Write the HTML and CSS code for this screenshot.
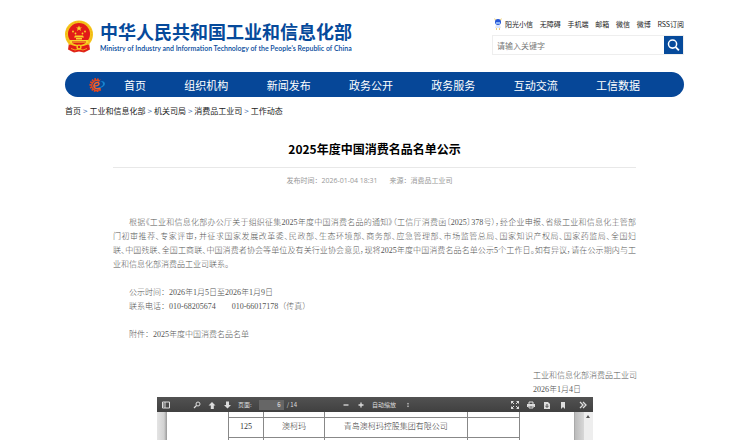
FILE: index.html
```html
<!DOCTYPE html>
<html lang="zh-CN">
<head>
<meta charset="utf-8">
<title>2025年度中国消费名品名单公示</title>
<link rel="stylesheet" href="styles.css">
</head>
<body>
<div class="page">
  <header class="header">
    <a class="brand" href="#">
      <svg class="emblem" viewBox="0 0 28 32" aria-hidden="true">
        <path d="M4 22 L3 29 L9 32 L14 31 L19 32 L25 29 L24 22Z" fill="#e02a1b"/>
        <circle cx="14" cy="14" r="14" fill="#f6c61c"/>
        <circle cx="14" cy="14" r="12.600" fill="none" stroke="#efb417" stroke-width="1" stroke-dasharray="2 1"/>
        <circle cx="14" cy="13.500" r="11" fill="#e21a18"/>
        <path d="M14 5l.9 2h2.100l-1.700 1.300.7 2.100-2-1.300-2 1.300.7-2.100L11 7h2.100z" fill="#f9d42a"/>
        <g fill="#f9d42a"><circle cx="8" cy="11" r=".9"/><circle cx="20" cy="11" r=".9"/><circle cx="10.500" cy="13" r=".9"/><circle cx="17.500" cy="13" r=".9"/></g>
        <path d="M10 15h8l1 2H9zM11 17.500h6v1.500h-6zM5 19.500h18v3H5z" fill="#f9d42a"/>
        <path d="M7 21h14v1H7z" fill="#e21a18"/>
        <path d="M5 24q9 4 18 0l1 5q-5 3-10 1-5 2-10-1z" fill="#e21a18"/>
        <circle cx="14" cy="26.500" r="2.600" fill="#f6c61c"/><circle cx="14" cy="26.500" r="1.200" fill="#e21a18"/>
        <path d="M6 28l4 1.500 4-1 4 1 4-1.500" fill="none" stroke="#f6c61c" stroke-width=".8"/>
      </svg>
      <span class="brand-text">
        <span class="brand-zh">中华人民共和国工业和信息化部</span>
        <span class="brand-en">Ministry of Industry and Information Technology of the People's Republic of China</span>
      </span>
    </a>
    <div class="tools">
      <nav class="links" aria-label="快捷链接">
        <a class="mascot" href="#"><svg viewBox="0 0 8 12" aria-hidden="true"><path d="M1 3L0 0l3 2M7 3l1-3-3 2" fill="#f5d98a"/><circle cx="4" cy="4" r="3" fill="#2456d8"/><path d="M2 4h4v2H2z" fill="#8db4f5"/><path d="M2 7h4l1 3H1z" fill="#dfe8fa"/><path d="M2 10h1v2H2zM5 10h1v2H5z" fill="#f3cf76"/></svg>阳光小信</a>
        <a href="#">无障碍</a><a href="#">手机端</a><a href="#">邮箱</a><a href="#">微信</a><a href="#">微博</a><a href="#">RSS订阅</a>
      </nav>
      <form class="search">
        <input type="text" placeholder="请输入关键字" aria-label="请输入关键字">
        <button type="button" aria-label="搜索"><svg viewBox="0 0 19 19" aria-hidden="true"><circle cx="8.500" cy="8.500" r="4.300" fill="none" stroke="#fff" stroke-width="1.600"/><path d="M11.800 11.800l3.400 3.400" stroke="#fff" stroke-width="2"/></svg></button>
      </form>
    </div>
  </header>

  <nav class="mainnav" aria-label="主导航">
    <svg class="gear" viewBox="0 0 16 16" aria-hidden="true">
      <path d="M11.500 12.500A6 6 0 1 1 11 3.300" fill="none" stroke="#e5481d" stroke-width="2" stroke-dasharray="1.600 1"/>
      <path d="M11.500 11.800A5 5 0 1 1 10.500 4.200" fill="none" stroke="#e5481d" stroke-width="1.600"/>
      <path d="M4.500 9c3 .3 5.500-.5 5.500-2.300S5.800 5 5 8.200s3.500 4.300 6.500 2.600" fill="none" stroke="#f4622d" stroke-width="1.500"/>
      <path d="M11 4c5.500-.5 6.500 4 2.500 6-2 1-4 1-6 .5 4 0 6.500-1.500 6.500-3.500 0-1.500-1-2.500-3-3z" fill="#1785cf"/>
    </svg>
    <div class="menu">
      <a href="#">首页</a><a href="#">组织机构</a><a href="#">新闻发布</a><a href="#">政务公开</a><a href="#">政务服务</a><a href="#">互动交流</a><a href="#">工信数据</a>
    </div>
  </nav>

  <nav class="crumbs" aria-label="当前位置">
    <a href="#">首页</a><span>&gt;</span><a href="#">工业和信息化部</a><span>&gt;</span><a href="#">机关司局</a><span>&gt;</span><a href="#">消费品工业司</a><span>&gt;</span><a href="#">工作动态</a>
  </nav>

  <main class="article">
    <h1>2025年度中国消费名品名单公示</h1>
    <div class="meta"><span>发布时间：2026-01-04 18:31</span><span>来源：消费品工业司</span></div>
    <div class="content">
      <p class="lead">
        <span class="line first">根据《工业和信息化部办公厅关于组织征集2025年度中国消费名品的通知》（工信厅消费函〔2025〕378号），经企业申报、省级工业和信息化主管部</span>
        <span class="line">门初审推荐、专家评审，并征求国家发展改革委、民政部、生态环境部、商务部、应急管理部、市场监管总局、国家知识产权局、国家药监局、全国妇</span>
        <span class="line">联、中国残联、全国工商联、中国消费者协会等单位及有关行业协会意见，现将2025年度中国消费名品名单公示5个工作日。如有异议，请在公示期内与工</span>
        <span class="line last">业和信息化部消费品工业司联系。</span>
      </p>
      <p>公示时间：2026年1月5日至2026年1月9日<br>联系电话：010-68205674&emsp;&emsp;010-66017178（传真）</p>
      <p>附件：2025年度中国消费名品名单</p>
      <div class="sign">工业和信息化部消费品工业司<br>2026年1月4日</div>
    </div>
    <section class="viewer" aria-label="附件预览">
      <div class="toolbar">
        <div class="group left">
          <button type="button" class="side" aria-label="侧栏"><svg viewBox="0 0 8 8"><path d="M.5 1h7v6h-7zM3 1v6M1 3h1M1 5h1" fill="none" stroke="#ddd"/></svg></button>
          <button type="button" aria-label="查找"><svg viewBox="0 0 8 8"><circle cx="5" cy="3" r="2" fill="none" stroke="#ddd"/><path d="M3.500 4.500L1 7" stroke="#ddd" stroke-width="1.300"/></svg></button>
          <button type="button" aria-label="上一页"><svg viewBox="0 0 8 8"><path d="M4 1l3.500 3.500H5.800V8H2.800V4.500H.5z" fill="#ddd"/></svg></button>
          <button type="button" aria-label="下一页"><svg viewBox="0 0 8 8"><path d="M4.500 7.500L8 4H6V.5H3V4H1z" fill="#ddd"/></svg></button>
          <label for="pageno">页面:</label><input id="pageno" type="text" value="6"><span>/ 14</span>
        </div>
        <div class="group zoom">
          <button type="button" aria-label="缩小"><svg viewBox="0 0 8 8"><path d="M1.500 4h5" stroke="#ddd" stroke-width="1.300"/></svg></button>
          <button type="button" aria-label="放大"><svg viewBox="0 0 8 8"><path d="M1.500 4h5M4 1.500v5" stroke="#ddd" stroke-width="1.300"/></svg></button>
          <div class="scale"><select aria-label="缩放"><option>自动缩放</option></select><svg viewBox="0 0 4 8" aria-hidden="true"><path d="M2 1l1.500 2h-3zM2 7l1.500-2h-3z" fill="#ddd"/></svg></div>
        </div>
        <div class="group right">
          <button type="button" aria-label="全屏"><svg viewBox="0 0 8 8"><path d="M0 0h3L0 3zM8 0v3L5 0zM0 8V5l3 3zM8 8H5l3-3z" fill="#ddd"/><path d="M1 1l2 2M7 1L5 3M1 7l2-2M7 7L5 5" stroke="#ddd"/></svg></button>
          <button type="button" aria-label="打印"><svg viewBox="0 0 8 8"><path d="M2 3V1h4v2M2 5h4v2H2z" fill="none" stroke="#ddd"/><path d="M0 3h8v3H6.500V5h-5v1H0z" fill="#ddd"/></svg></button>
          <button type="button" aria-label="下载"><svg viewBox="0 0 8 8"><path d="M1 1h4l2 2v5H1z" fill="#ddd"/><path d="M4 3v2.500M2.500 4.800L4 6.500l1.500-1.700" fill="none" stroke="#444"/></svg></button>
          <button type="button" aria-label="书签"><svg viewBox="0 0 8 8"><path d="M2 1h4v7L4 6 2 8z" fill="#ddd"/></svg></button>
          <button type="button" class="more" aria-label="更多"><svg viewBox="0 0 8 8"><path d="M1 1l3 3-3 3M4 1l3 3-3 3" fill="none" stroke="#ddd" stroke-width="1.300"/></svg></button>
        </div>
      </div>
      <div class="canvas">
        <div class="sheet">
          <table>
            <tr class="cut"><td></td><td></td><td></td><td></td></tr>
            <tr><td>125</td><td>澳柯玛</td><td>青岛澳柯玛控股集团有限公司</td><td></td></tr>
            <tr class="cut"><td></td><td></td><td></td><td></td></tr>
          </table>
        </div>
        <div class="scrollbar"><svg viewBox="0 0 4 3" aria-hidden="true"><path d="M2 0l2 3H0z" fill="#555"/></svg></div>
      </div>
    </section>
  </main>
</div>
</body>
</html>
```
FILE: styles.css
```css
* { box-sizing: border-box; }
html { overflow: hidden; }
body {
  margin: 0;
  background: #fff;
  color: #222;
  font-family: "Noto Sans CJK SC", sans-serif;
  font-size: 8px;
}
a { color: inherit; text-decoration: none; }
button, input, select { font: inherit; border: 0; padding: 0; margin: 0; border-radius: 0; }
button { background: none; }
svg { display: block; }
.page { padding: 16px 64px 0 65px; }

.header { display: flex; justify-content: space-between; height: 56px; }
.brand { display: flex; gap: 7px; padding-top: 3px; color: #064a9b; }
.emblem { width: 28px; height: 33px; margin-top: 1px; }
.brand-text { display: flex; flex-direction: column; white-space: nowrap; }
.brand-zh { font-size: 18px; line-height: 24px; font-weight: 700; }
.brand-en { font: 600 7px/10px Lato, sans-serif; }
.tools { width: 192px; }
.links { display: flex; justify-content: space-between; align-items: center; height: 16px; padding-left: 2px; font-size: 7px; white-space: nowrap; }
.mascot { display: flex; align-items: center; gap: 3px; }
.mascot svg { width: 8px; height: 12px; }
.search { display: flex; align-items: center; margin-top: 3px; height: 20px; border: 1px solid #eee; }
.search input { flex: 1; min-width: 0; height: 18px; padding: 0 4px; outline: 0; background: #fff; }
.search input::placeholder { color: #777; opacity: 1; }
.search button { width: 19px; height: 18px; background: #064a9b; }
.search svg { width: 19px; height: 18px; }

.mainnav { display: flex; align-items: center; height: 25px; border-radius: 13px; background: #064798; padding: 0 44px 0 24px; color: #fff; }
.gear { width: 16px; height: 16px; }
.menu { flex: 1; display: flex; justify-content: space-between; margin-left: 19px; font-size: 11px; line-height: 24px; }

.crumbs { display: flex; gap: 2px; padding-top: 8px; line-height: 12px; }
.crumbs span { color: #3b6db0; }

.article { padding: 0 48px; }
h1 { margin: 0; padding: 22px 0 8px; border-bottom: 1px solid #e8e8e8; color: #000; font-size: 12px; line-height: 20px; font-weight: 700; text-align: center; }
.meta { display: flex; justify-content: center; gap: 12px; padding: 7px 10px 0 0; color: #999; font-family: "Open Sans", "Noto Sans CJK SC", sans-serif; font-size: 7px; line-height: 12px; }
.content { padding-top: 29px; color: #555; font-family: "Liberation Serif", "Noto Sans CJK SC", serif; font-weight: 300; line-height: 14px; }
.content p { margin: 0 0 14px; padding-left: 16px; }
.content .lead { padding: 0; }
.line { display: block; text-align: justify; text-align-last: justify; font-feature-settings: "palt"; }
.line.first { padding-left: 16px; }
.line.last { text-align-last: left; }
.content .sign { margin: 27px 0 0 420px; white-space: nowrap; }

.viewer { margin: 0 43px 0 44px; }
.toolbar { display: flex; align-items: center; height: 15px; background: linear-gradient(#525252, #404040); color: #ddd; font-size: 6px; line-height: 10px; }
.toolbar button svg { width: 8px; height: 8px; }
.group { display: flex; align-items: center; gap: 7px; }
.left { padding-left: 5px; }
.left .side { margin-right: 16px; }
.left input { width: 25px; height: 10px; padding-right: 3px; background: #666; color: #eee; text-align: right; }
.left span { margin-left: -4px; }
.zoom { margin-left: 45px; }
.scale { display: flex; align-items: center; gap: 4px; }
.scale select { appearance: none; width: 30px; background: none; color: #ddd; }
.scale svg { width: 4px; height: 6px; }
.right { margin-left: auto; padding-right: 6px; gap: 8px; }
.right .more { margin-left: 4px; }
.canvas { display: flex; height: 28px; overflow: hidden; background: linear-gradient(90deg, #e4e4e4, #d2d2d2 7px, #999 10px, #fff 10px); }
.sheet { flex: 1; padding: 0 54px 0 71px; border-right: 1px solid #aaa; }
.sheet table { width: 100%; table-layout: fixed; border-collapse: collapse; color: #333; font: 8px/10px "Liberation Serif", "Noto Sans CJK SC", serif; text-align: center; }
.sheet td { height: 20px; padding: 0; border: 1px solid #888; font-weight: 300; }
.sheet td:nth-child(1) { width: 12%; }
.sheet td:nth-child(2) { width: 21%; }
.sheet td:nth-child(4) { width: 18%; }
.sheet .cut td { height: 5px; border-top: 0; }
.scrollbar { display: flex; justify-content: flex-end; width: 18px; padding: 3px 3px 0 0; background: linear-gradient(90deg, #bbb, #d8d8d8 9px, #eee 9px); }
.scrollbar svg { width: 4px; height: 3px; }
```
